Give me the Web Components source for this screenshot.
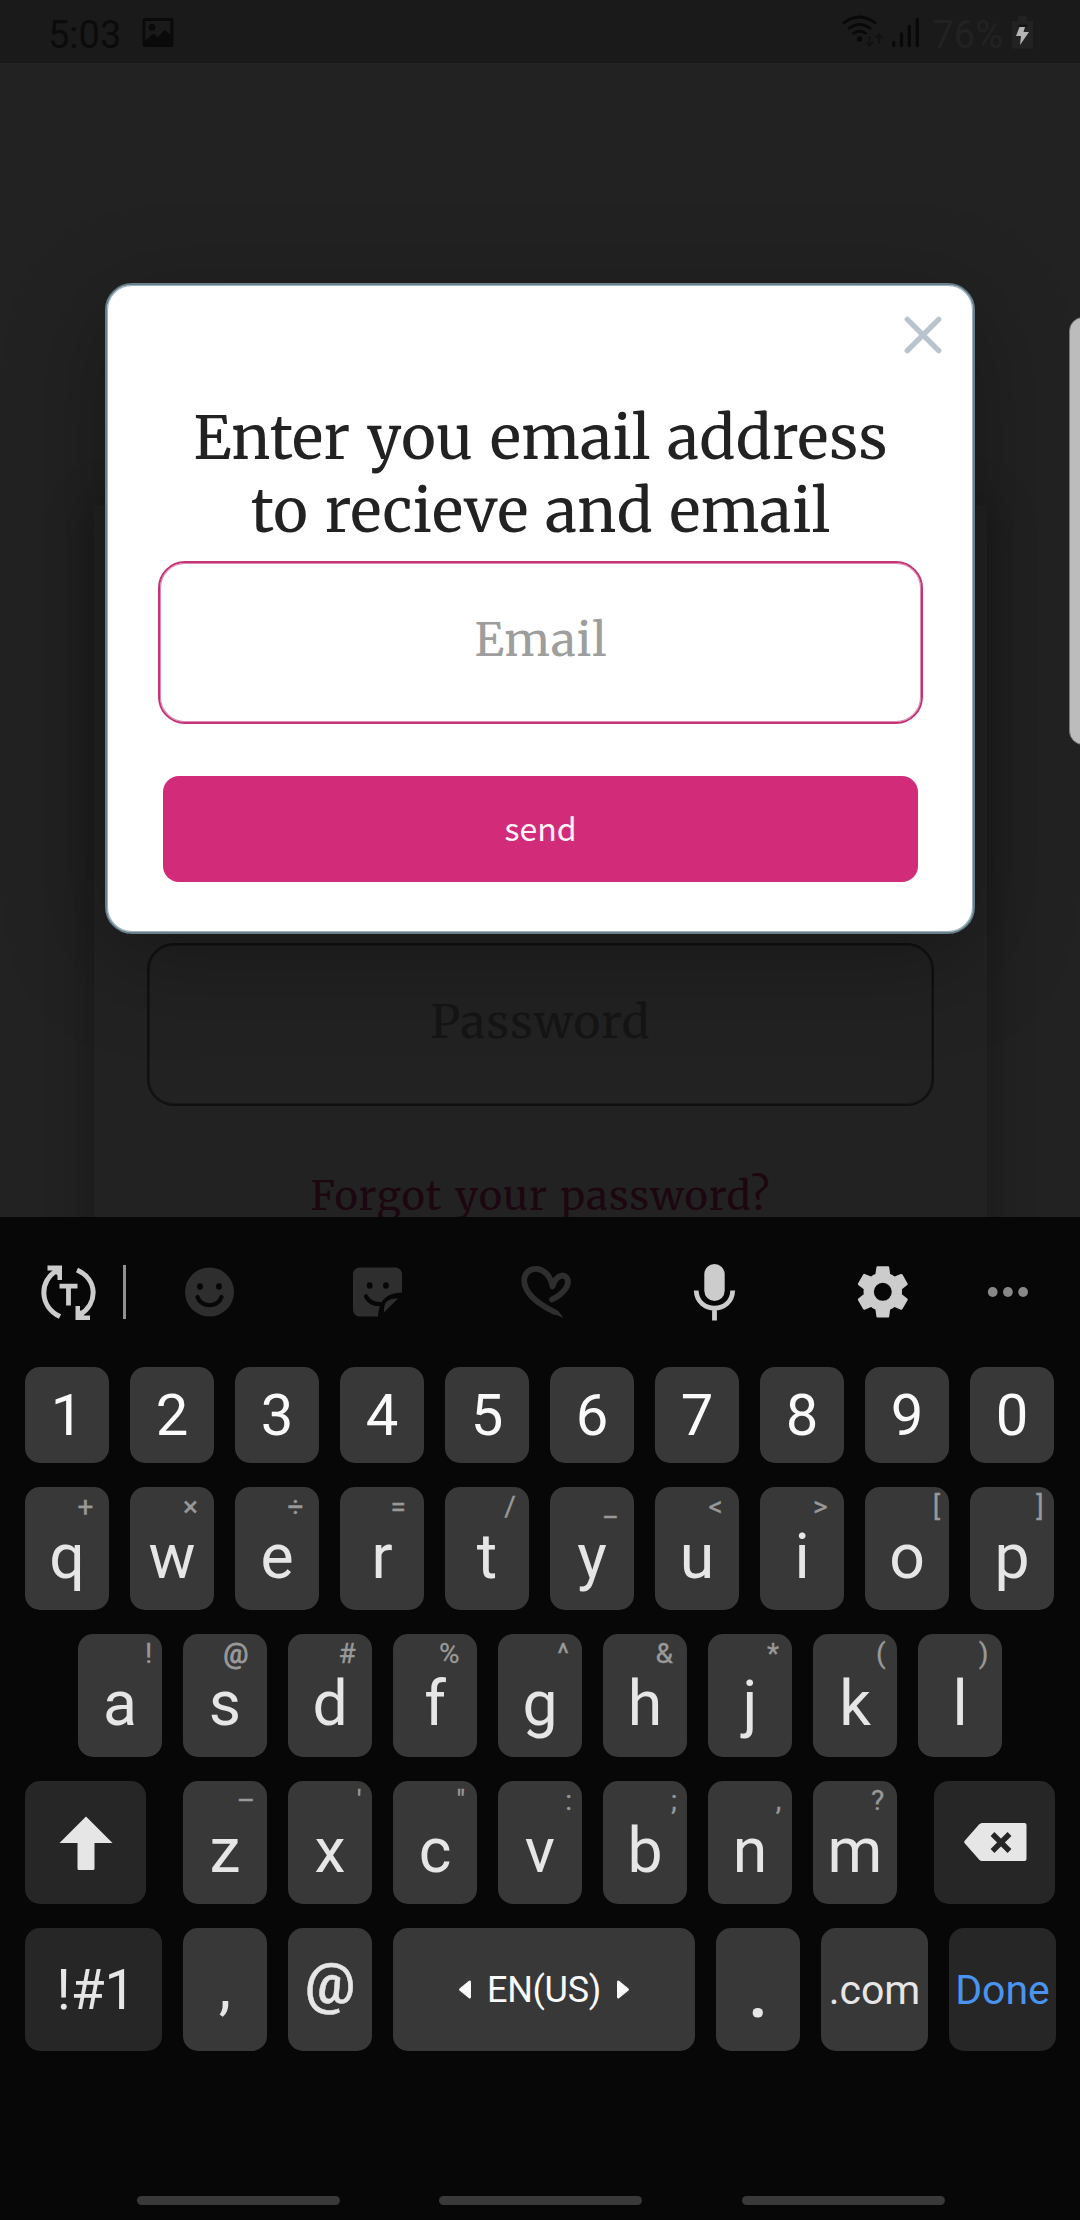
<!DOCTYPE html>
<html lang="en">
<head>
<meta charset="utf-8">
<title>Sign in</title>
<style>
  html, body { margin: 0; padding: 0; background: #070707; }
  body { width: 1080px; height: 2220px; overflow: hidden; font-family: Roboto, sans-serif; }
</style>
</head>
<body>
<phone-screen></phone-screen>
<script>
const define = (name, html, setup) => customElements.define(name, class extends HTMLElement {
  constructor() {
    super();
    this.attachShadow({ mode: 'open' }).innerHTML = html;
  }
  connectedCallback() { if (setup) setup(this, this.shadowRoot); }
});

/* One line of text, tracked so that it fills the given width. */
define('fit-line', `
<style>
  :host { display: flex; justify-content: center; white-space: nowrap; word-spacing: 2px; }
</style><span><slot></slot></span>`, (el, root) => {
  const span = root.querySelector('span');
  const n = el.textContent.length;
  const gap = (Number(el.getAttribute('width')) - span.getBoundingClientRect().width) / (n - 1);
  span.style.letterSpacing = gap + 'px';
  span.style.marginRight = -gap + 'px';
});

define('status-bar', `
<style>
  :host { display: flex; align-items: center; justify-content: space-between; height: 63px; box-sizing: border-box;
    padding: 6.400px 47px 0 48px; background: #1a1a1a; color: #0b0b0b; font: 400 38px/56px Roboto, sans-serif; }
  div { display: flex; align-items: center; }
  svg { display: block; }
  .pct { color: #222; margin: 0 9px 0 13px; }
</style>
<div><span>5:03</span>
<svg style="margin:0 0 3.400px 21px" width="32" height="32" viewBox="142 17 32 32"><path fill="#0a0a0a" fill-rule="evenodd" d="M144.500 18h27a2 2 0 0 1 2 2v25a2 2 0 0 1-2 2h-27a2 2 0 0 1-2-2V20a2 2 0 0 1 2-2zM145.300 21v19.500l7.500-6.500q1-.8 1.800.2l3 3.300 6-6.500q1.300-1.200 2.500-.2l4.200 4.200V21z"/><circle cx="152" cy="27.300" r="3.400" fill="#0a0a0a"/></svg></div>
<div>
<svg style="margin-bottom:7.400px" width="78" height="34" viewBox="839 14 78 34" fill="none" stroke="#090909" stroke-width="2.700">
<path d="M841 23.500q16.500-13 33 0M846 29q11.500-9 23 0M850.500 34q7-5.500 14 0"/><circle cx="857.500" cy="39" r="2.700" fill="#090909" stroke="none"/>
<path stroke="#121212" stroke-width="2" d="M867.500 36v9M864 42l3.500 3.500L871 42M877 44v-9M873.500 38l3.500-3.500 3.500 3.500"/>
<path stroke-width="3.300" stroke-linecap="round" d="M891.700 42.500v3M899.500 34v11.500M907.300 26.500v19M915.300 19.500v26"/></svg>
<span class="pct">76%</span>
<svg style="margin-bottom:5.400px" width="21" height="34" viewBox="1012 15 21 34"><path fill="#222" d="M1012 21h21v27.500h-21zM1018 16h9v5h-9z"/><path fill="#141414" d="M1018 27l1.500-2.500h8l-.5 2.500z"/><path fill="#b4b4b4" d="M1019.500 27h5.500l-1.500 5h5.500l-9 13 1-9h-5z"/></svg>
</div>`);

define('text-box', `
<style>
  :host { display: flex; align-items: center; justify-content: center; box-sizing: border-box; height: 163px; padding-bottom: 5px; border: 2px solid var(--line);
    border-radius: 27px; box-shadow: inset 0 0 0 1px var(--soft); color: var(--hint); font-size: 46px; line-height: 60px; }
</style><slot></slot>`);

define('login-card', `
<style>
  :host { display: block; width: 893px; height: 900px; box-sizing: border-box; padding: 438px 53px 0; background: #222;
    box-shadow: 0 0 44px rgba(0,0,0,.32); font-family: Merriweather, "Noto Serif", "DejaVu Serif Condensed", "DejaVu Serif", serif; }
  text-box { --line: #101010; --soft: #191919; --hint: #151515; margin: 0; }
  .forgot { color: #1c0710; font-size: 40px; line-height: 60px; margin-top: 60px; }
</style>
<text-box><fit-line width="219">Password</fit-line></text-box>
<fit-line class="forgot" width="459">Forgot your password?</fit-line>`);

define('send-button', `
<style>
  :host { display: flex; justify-content: center; align-items: center; box-sizing: border-box; height: 106px; padding-bottom: 4px; border-radius: 16px; background: #d12b7a; color: #fff4fa;
    font: 400 32px/46px "Noto Sans CJK SC", "Noto Sans CJK JP", sans-serif; }
</style><slot></slot>`);

define('email-dialog', `
<style>
  :host { display: flex; flex-direction: column; box-sizing: border-box; width: 870px; height: 651px; padding: 31px 50px 0 51px; background: #fff;
    border: 2px solid #67808c; border-radius: 27px; box-shadow: inset 0 0 0 1px #9db2bb, 0 24px 100px rgba(0,0,0,.3);
    font-family: Merriweather, "Noto Serif", "DejaVu Serif Condensed", "DejaVu Serif", serif; }
  .close { align-self: flex-end; display: block; margin: 0 -19px 0 0; }
  h1 { margin: 48px 0 0; font-weight: 400; font-size: 59px; line-height: 73px; color: #222; }
  text-box { --line: #c4337a; --soft: #dd8bb3; --hint: #9e9e9e; margin-top: 13px; }
  send-button { margin: 52px 5px 0; }
</style>
<svg class="close" width="38" height="38" viewBox="0 0 38 38"><path d="M3.300 3.300l31.400 31.400M34.700 3.300L3.300 34.700" stroke="#b9c4ce" stroke-width="5.400" stroke-linecap="round"/></svg>
<h1><fit-line width="694">Enter you email address</fit-line><fit-line width="579">to recieve and email</fit-line></h1>
<text-box><fit-line width="132">Email</fit-line></text-box>
<send-button>send</send-button>`);

define('app-page', `
<style>
  :host { display: flex; justify-content: center; position: relative; height: 1154px; overflow: hidden; box-sizing: border-box; padding-top: 442px; background: #222; }
  email-dialog { position: absolute; left: 105px; top: 220px; }
  .edge { position: absolute; left: 1069px; top: 254px; width: 30px; height: 426px; border: 1px solid #777; border-radius: 14px; background: #bcbcbc; }
</style>
<login-card></login-card><email-dialog></email-dialog><div class="edge"></div>`);

/* A key: "hint" is the long-press symbol, "off" the distance of its centre from the right edge. */
define('kb-key', `
<style>
  :host { display: flex; align-items: center; justify-content: center; position: relative; box-sizing: border-box; flex: none; width: 84px; height: 123px;
    padding-top: 16px; border-radius: 15px; background: #383838; color: #e6e6e6; font: 400 62.500px/74px Roboto, sans-serif; white-space: nowrap; }
  :host([num]) { height: 96px; padding: 0; font-size: 58px; color: #fafafa; }
  :host([dark]) { background: #262626; }
  .hint { position: absolute; top: 0; font-size: 28px; line-height: 40px; color: #999; transform: translateX(50%); -webkit-text-stroke: .3px #999; }
  :host([hint="@"]) .hint { -webkit-text-stroke-width: .9px; }
  ::slotted(svg) { display: block; }
</style><slot></slot><span class="hint"></span>`, (el, root) => {
  const h = root.querySelector('.hint');
  if (el.hasAttribute('hint')) { h.textContent = el.getAttribute('hint'); h.style.right = el.getAttribute('off') + 'px'; }
  else h.remove();
});

define('kb-row', `
<style>:host { display: flex; gap: 21px; }</style><slot></slot>`);

define('kb-tools', `
<style>
  :host { display: flex; align-items: center; height: 150px; }
  svg { display: block; flex: none; }
</style>
<svg style="margin-left:38px" width="60" height="60" viewBox="38 1261.500 60 60" fill="none" stroke="#cccccc" stroke-width="5">
<path d="M60 1316C39 1306 39 1280 57 1270M77 1269.500C98 1279 98 1303 80 1314"/><path fill="#ccc" stroke="none" d="M47.500 1265H62v14.500h-4.500V1275l-5-5h-5zM75.500 1305.500h4.500v4l4 5.500h6v4.500H75.500z"/>
<path d="M59.500 1285.700h18M68.500 1284v21" stroke-width="4.800"/></svg>
<svg style="margin-left:25px" width="3" height="54"><rect width="3" height="54" fill="#909090"/></svg>
<svg style="margin-left:57px" width="53" height="54" viewBox="183 1264.500 53 54"><circle cx="209.500" cy="1291.500" r="24.500" fill="#2e2e2e"/><g fill="#070707"><ellipse cx="200" cy="1286" rx="2.900" ry="3.200"/><ellipse cx="219" cy="1286" rx="2.900" ry="3.200"/></g><path d="M197.500 1296.500C201 1307.500 218 1307.500 221.500 1296.500" fill="none" stroke="#070707" stroke-width="4.200" stroke-linecap="round"/></svg>
<svg style="margin-left:115px" width="53" height="54" viewBox="351 1264.500 53 54"><path fill="#2e2e2e" d="M359.500 1267H395.500a6.500 6.500 0 0 1 6.500 6.500V1292Q379 1292 378 1316H359.500a6.500 6.500 0 0 1-6.500-6.500V1273.500a6.500 6.500 0 0 1 6.500-6.500z"/><g fill="#070707"><ellipse cx="369.700" cy="1285" rx="2.900" ry="3.200"/><ellipse cx="386" cy="1285" rx="2.900" ry="3.200"/></g><path d="M366 1296Q370 1304 380.500 1303.500" fill="none" stroke="#070707" stroke-width="4.200" stroke-linecap="round"/><path fill="#2e2e2e" d="M398 1298Q384 1297.500 384 1309v3z"/></svg>
<svg style="margin-left:115px" width="54" height="56" viewBox="518.500 1263.500 54 56"><path fill="none" stroke="#2e2e2e" stroke-width="5.800" stroke-linecap="round" stroke-linejoin="round" d="M554 1311.500C541 1305 524 1295 523.700 1280C524 1264 548 1263 552 1286C555 1276 562 1272.500 566 1277C571 1284 562 1294 551.500 1299"/><path fill="#2e2e2e" d="M545 1310l18 7.500-5.500-7.500z"/></svg>
<svg style="margin-left:118px" width="48" height="60" viewBox="690 1261.500 48 60"><rect x="703.300" y="1263.500" width="20.400" height="37" rx="10.200" fill="#ccc"/><path fill="none" stroke="#ccc" stroke-width="4.800" d="M695.200 1290C696 1313.500 731 1313.500 731.700 1290M713.500 1307v13"/></svg>
<svg style="margin-left:113px" width="61.600" height="61.600" viewBox="0 0 24 24"><path fill="#ccc" d="M19.430 12.980c.04-.32.07-.64.07-.98s-.03-.66-.07-.98l2.110-1.650c.19-.15.24-.42.12-.64l-2-3.460c-.12-.22-.39-.3-.61-.22l-2.490 1c-.52-.4-1.080-.73-1.690-.98l-.38-2.650C14.460 2.180 14.250 2 14 2h-4c-.25 0-.46.18-.49.42l-.38 2.650c-.61.25-1.170.59-1.690.98l-2.490-1c-.23-.09-.49 0-.61.22l-2 3.460c-.13.22-.07.49.12.64l2.110 1.650c-.04.32-.07.65-.07.98s.03.66.07.98l-2.110 1.650c-.19.15-.24.42-.12.64l2 3.460c.12.22.39.3.61.22l2.490-1c.52.4 1.080.73 1.690.98l.38 2.650c.03.24.24.42.49.42h4c.25 0 .46-.18.49-.42l.38-2.650c.61-.25 1.170-.59 1.690-.98l2.490 1c.23.09.49 0 .61-.22l2-3.460c.12-.22.07-.49-.12-.64zM12 15.500a3.500 3.500 0 1 1 0-7 3.500 3.500 0 0 1 0 7z"/></svg>
<svg style="margin-left:73.400px" width="42" height="12" viewBox="985.700 1285.500 42 12" fill="#888"><circle cx="991.400" cy="1291.500" r="4.900"/><circle cx="1006.600" cy="1291.500" r="4.900"/><circle cx="1021.800" cy="1291.500" r="4.900"/></svg>`);

const keys = s => s.map(([c, h, o]) => `<kb-key hint='${h === "'" ? '&#39;' : h}' off="${o}">${c}</kb-key>`).join('');

define('soft-keyboard', `
<style>
  :host { display: flex; flex-direction: column; gap: 24px; box-sizing: border-box; height: 1003px; background: #070707; padding: 0 24px 0 25px; }
  kb-tools { margin: 0 -24px -24px -25px; }
  .mid { padding-left: 53px; }
  .w121 { width: 121px; padding: 0; }
  .gapr { margin-right: 16px; } .gapl { margin-left: 16px; padding: 0 0 1px 2px; }
  .space { display: flex; align-items: center; gap: 16px; font-size: 36px; letter-spacing: -.3px; }
</style>
<kb-tools></kb-tools>
<kb-row>${[..."1234567890"].map(d => `<kb-key num>${d}</kb-key>`).join('')}</kb-row>
<kb-row>${keys([['q','+',23.6],['w','×',23.6],['e','÷',23.6],['r','=',25.8],['t','/',19],['y','_',23.6],['u','&lt;',23.3],['i','&gt;',23.6],['o','[',12.6],['p',']',14]])}</kb-row>
<kb-row class="mid">${keys([['a','!',13.4],['s','@',31.3],['d','#',25],['f','%',27.7],['g','^',19],['h','&amp;',22.7],['j','*',19],['k','(',16.3],['l',')',18.4]])}</kb-row>
<kb-row><kb-key dark class="w121 gapr"><svg width="54" height="56" viewBox="0 0 54 56"><path fill="#e6e6e6" d="M27 1.500L53.500 28H35.500V53.500a1.500 1.500 0 0 1-1.500 1.500H20a1.500 1.500 0 0 1-1.500-1.500V28H.5z"/></svg></kb-key>${keys([['z','–',21],['x',"'",12.7],['c','"',16.3],['v',':',13.4],['b',';',13.1],['n',',',13.4],['m','?',19.5]])}<kb-key dark class="w121 gapl"><svg width="64" height="40" viewBox="0 0 64 40"><path fill="#e6e6e6" d="M18 1H60.500a2 2 0 0 1 2 2V37a2 2 0 0 1-2 2H18Q16.500 39 15 37.500L.5 21Q0 20 .5 19L15 2.500Q16.500 1 18 1z"/><path d="M28.500 12L45.500 29M45.500 12L28.500 29" stroke="#262626" stroke-width="5.400"/></svg></kb-key></kb-row>
<kb-row>
<kb-key dark style="width:137px;font-size:55px;padding:0 0 0 5px">!#1</kb-key>
<kb-key style="padding:0 0 5px">,</kb-key>
<kb-key style="padding:0 0 11px;font-size:56px;font-weight:500;-webkit-text-stroke:.5px #e6e6e6">@</kb-key>
<kb-key style="width:302px;padding:0"><div class="space"><svg width="12" height="19" viewBox="0 0 12 19"><path fill="#fafafa" d="M12 1.500v16q-.5 1.500-2 .8L.5 10.500q-.8-1 0-2L10 .7q1.500-.7 2 .8z"/></svg><span style="color:#fafafa">EN(US)</span><svg width="12" height="19" viewBox="0 0 12 19"><path fill="#fafafa" d="M0 1.500v16q.5 1.500 2 .8l9.500-7.800q.8-1 0-2L2 .7Q.5 0 0 1.500z"/></svg></div></kb-key>
<kb-key style="font-size:64px;font-weight:700;padding:13px 0 0">.</kb-key>
<kb-key style="width:107px;font-size:41px;padding:0">.com</kb-key>
<kb-key dark style="width:107px;font-size:41px;padding:0;color:#4a94f0">Done</kb-key>
</kb-row>
<nav-bars></nav-bars>`);

define('nav-bars', `
<style>
  :host { display: flex; justify-content: center; gap: 99.500px; margin-top: 121px; }
  i { width: 203px; height: 9px; border-radius: 4.500px; background: #393939; }
</style><i></i><i></i><i></i>`);

define('phone-screen', `
<style>:host { display: flex; flex-direction: column; width: 1080px; height: 2220px; overflow: hidden; }</style>
<status-bar></status-bar><app-page></app-page><soft-keyboard></soft-keyboard>`);
</script>
</body>
</html>
